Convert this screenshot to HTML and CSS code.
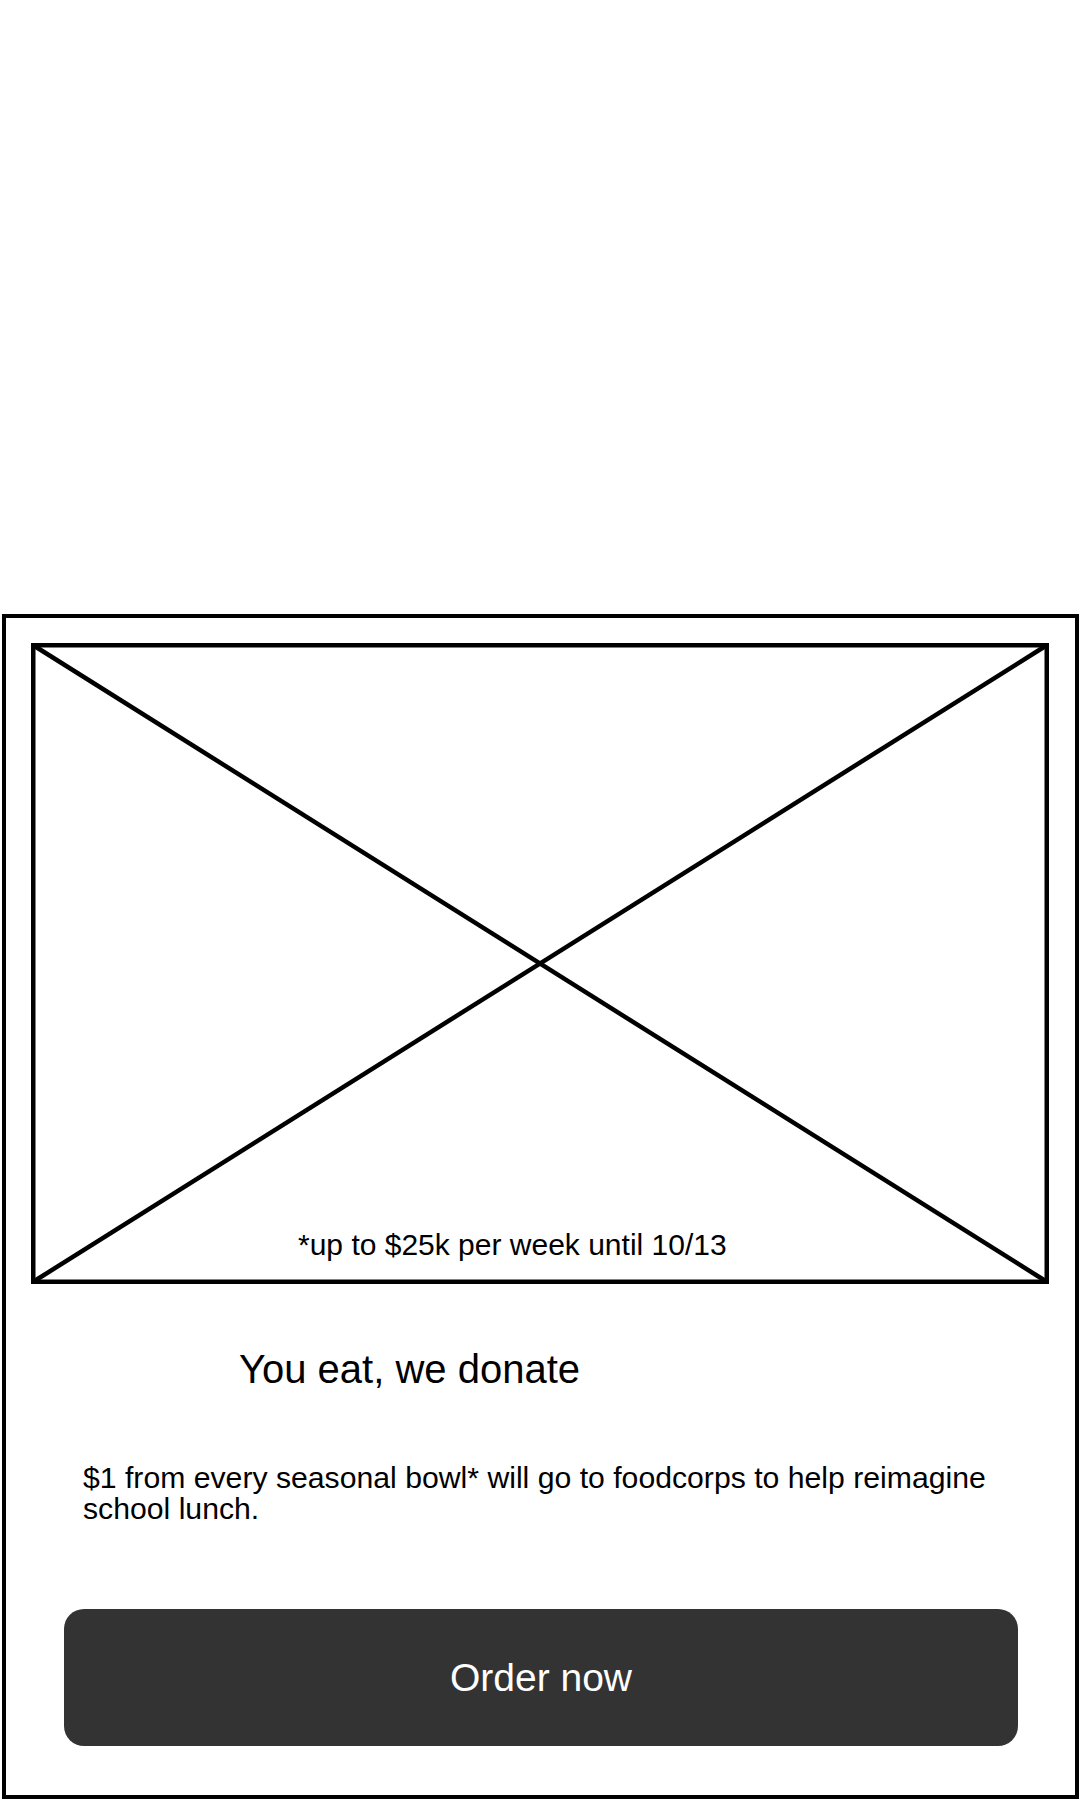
FILE: index.html
```html
<!DOCTYPE html>
<html lang="en">
<head>
<meta charset="utf-8">
<title>You eat, we donate</title>
<link rel="stylesheet" href="styles.css">
</head>
<body>
  <section class="card">
    <div class="image">
      <svg class="image-ph" viewBox="0 0 1018 641" preserveAspectRatio="none" aria-hidden="true">
        <rect x="2.25" y="2.25" width="1013.5" height="636.5" fill="none" stroke="#000" stroke-width="4.5"/>
        <line x1="2.25" y1="2.25" x2="1015.75" y2="638.75" stroke="#000" stroke-width="4.5"/>
        <line x1="1015.75" y1="2.25" x2="2.25" y2="638.75" stroke="#000" stroke-width="4.5"/>
      </svg>
      <p class="caption">*up to $25k per week until 10/13</p>
    </div>
    <h1 class="title">You eat, we donate</h1>
    <p class="text">$1 from every seasonal bowl* will go to foodcorps to help reimagine school lunch.</p>
    <button class="order" type="button">Order now</button>
  </section>
</body>
</html>
```

FILE: styles.css
```css
html, body {
  margin: 0;
  padding: 0;
  background: #ffffff;
}

body {
  font-family: "Liberation Sans", Arial, sans-serif;
  color: #000000;
}

.card {
  box-sizing: border-box;
  margin: 614px 1px 0 2px;
  width: 1077px;
  height: 1185px;
  border: 4px solid #000000;
  padding: 25px 0 0 25px;
  display: flex;
  flex-direction: column;
  align-items: flex-start;
}

.image {
  position: relative;
  box-sizing: border-box;
  width: 1018px;
  height: 641px;
  display: flex;
  align-items: flex-end;
  padding: 0 0 22px 267px;
}

.image-ph {
  position: absolute;
  inset: 0;
  width: 100%;
  height: 100%;
}

.caption {
  position: relative;
  margin: 0;
  font-size: 30px;
  line-height: 34px;
}

.title {
  margin: 63px 0 0 208px;
  font-size: 40px;
  line-height: 45px;
  font-weight: normal;
}

.text {
  margin: 70px 0 0 52px;
  width: 930px;
  font-size: 30.2px;
  line-height: 31px;
}

.order {
  margin: 85px 0 0 33px;
  width: 954px;
  height: 137px;
  border: none;
  border-radius: 20px;
  background: #333333;
  color: #ffffff;
  font-family: "Liberation Sans", Arial, sans-serif;
  font-size: 39px;
  display: flex;
  align-items: center;
  justify-content: center;
  padding: 0;
}
```
